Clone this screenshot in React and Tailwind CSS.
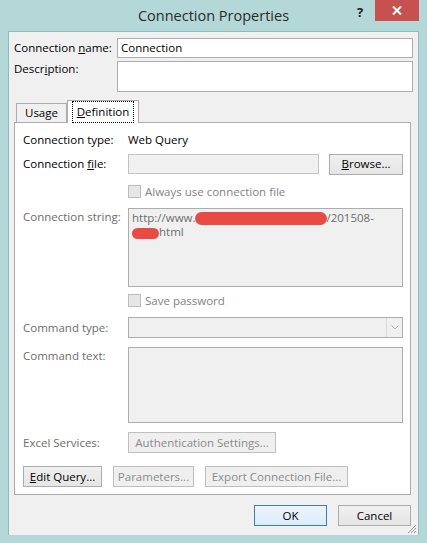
import React from 'react';

const font = { fontFamily: '"Open Sans", "Noto Sans", sans-serif' };

const Btn = ({ children, className = '', disabled = false }) => (
    <div className={`flex items-center justify-center h-[21px] border text-[11.5px] ${disabled ? 'border-[#bfbfbf] bg-[#efefef] text-[#8b8b8b]' : 'border-[#adadad] bg-gradient-to-b from-[#f0f0f0] to-[#e5e5e5] text-black'} ${className}`}>
        {children}
    </div>
);

const Check = ({ label }) => (
    <div className="flex items-center h-[13px]">
        <div className="w-[13px] h-[13px] border border-[#bcbcbc] bg-[#e6e6e6]" />
        <span className="ml-[4px] text-[11.5px] text-[#838383]">{label}</span>
    </div>
);

const Blob = ({ className }) => <span className={`inline-block bg-[#e84b44] rounded-full align-middle ${className}`} />;

export default function App() {
    return (
        <div style={font} className="w-[427px] h-[543px] bg-[#b4d7d8] flex flex-col text-[11.5px] text-black leading-none select-none">
            <div className="relative h-[31px] flex items-center justify-center">
                <span className="text-[14.5px] text-[#2b2b2b] mt-[1px]">Connection Properties</span>
                <span className="absolute left-[357px] top-[6px] text-[13px] font-bold text-[#222]">?</span>
                <div className="absolute left-[375px] top-0 w-[44px] h-[21px] bg-[#c75050] flex items-center justify-center">
                    <svg width="10" height="9" viewBox="0 0 10 9">
                        <path d="M1 0.5 L9 8.5 M9 0.5 L1 8.5" stroke="#fff" strokeWidth="2" />
                    </svg>
                </div>
            </div>
            <div className="relative mx-[8px] h-[504px] bg-[#f0f0f0] border border-[#8fb9ba] border-b-0 flex flex-col px-[5px]">
                <div className="flex items-center mt-[6px] h-[20px]">
                    <span className="w-[103px]">Connection <u>n</u>ame:</span>
                    <div className="flex-1 h-[20px] bg-white border border-[#abadb3] flex items-center px-[3px]">Connection</div>
                </div>
                <div className="flex items-start mt-[3px] h-[31px]">
                    <span className="w-[103px] mt-[2px]">Descr<u>i</u>ption:</span>
                    <div className="flex-1 h-[31px] bg-white border border-[#abadb3]" />
                </div>
                <div className="flex items-end mt-[8px] h-[22px] pl-[2px] relative z-10">
                    <div className="w-[51px] h-[19px] border border-[#acacac] border-b-0 bg-[#f0f0f0] flex items-center justify-center">
                        Usa<u>g</u>e
                    </div>
                    <div className="w-[72px] h-[23px] -mb-[1px] border border-[#acacac] border-b-0 bg-white flex items-center justify-center">
                        <span className="px-[4px] py-[4px] border border-dotted border-black"><u>D</u>efinition</span>
                    </div>
                </div>
                <div className="w-[397px] h-[373px] bg-white border border-[#acacac] flex flex-col pl-[8px] pr-[7px]">
                    <div className="flex items-center mt-[8px] h-[17px]">
                        <span className="w-[105px]">Connection type:</span>
                        <span>Web Query</span>
                    </div>
                    <div className="flex items-center mt-[6px] h-[20px]">
                        <span className="w-[105px]">Connection <u>f</u>ile:</span>
                        <div className="w-[191px] h-[20px] border border-[#c3c3c3] bg-[#f0f0f0]" />
                        <Btn className="w-[74px] ml-[10px] h-[20px]"><span><u>B</u>rowse...</span></Btn>
                    </div>
                    <div className="flex items-center mt-[11px] pl-[105px]">
                        <Check label="Always use connection file" />
                    </div>
                    <div className="flex items-start mt-[10px] h-[79px]">
                        <span className="w-[105px] mt-[3px] text-[#6d6d6d]">Connection string:</span>
                        <div className="w-[275px] h-[79px] border border-[#adadad] bg-[#f0f0f0] px-[3px] pt-[2px] text-[#6d6d6d] leading-[14px]">
                            <div className="whitespace-nowrap">
                                http://www.
                                <Blob className="w-[132px] h-[13px] -ml-[1px] rounded-[6px]" />
                                /201508-
                            </div>
                            <div className="whitespace-nowrap">
                                <Blob className="w-[27px] h-[11px]" />
                                html
                            </div>
                        </div>
                    </div>
                    <div className="flex items-center mt-[7px] pl-[105px]">
                        <Check label="Save password" />
                    </div>
                    <div className="flex items-center mt-[10px] h-[21px]">
                        <span className="w-[105px] text-[#6d6d6d]">Command type:</span>
                        <div className="w-[275px] h-[21px] border border-[#adadad] bg-[#f0f0f0] flex justify-end">
                            <div className="w-[16px] h-full border-l border-[#d9d9d9] flex items-center justify-center">
                                <svg width="8" height="5" viewBox="0 0 8 5">
                                    <path d="M0.5 0.5 L4 4 L7.5 0.5" stroke="#b0b0b0" strokeWidth="1" fill="none" />
                                </svg>
                            </div>
                        </div>
                    </div>
                    <div className="flex items-start mt-[9px] h-[76px]">
                        <span className="w-[105px] mt-[3px] text-[#6d6d6d]">Command text:</span>
                        <div className="w-[275px] h-[76px] border border-[#adadad] bg-[#f0f0f0]" />
                    </div>
                    <div className="flex items-center mt-[9px] h-[21px]">
                        <span className="w-[105px] text-[#6d6d6d]">Excel Services:</span>
                        <Btn disabled className="w-[148px]">Authentication Settings...</Btn>
                    </div>
                    <div className="flex items-center mt-[13px] h-[21px]">
                        <Btn className="w-[79px] border-[#8a8a8a]"><span><u>E</u>dit Query...</span></Btn>
                        <Btn disabled className="w-[81px] ml-[11px]">Parameters...</Btn>
                        <Btn disabled className="w-[143px] ml-[11px]">Export Connection File...</Btn>
                    </div>
                </div>
                <div className="flex justify-end mt-[10px] pr-[2px]">
                    <div className="w-[73px] h-[21px] border border-[#3c7fb1] bg-gradient-to-b from-[#ecf4fc] to-[#dcecfc] flex items-center justify-center">OK</div>
                    <Btn className="w-[73px] ml-[11px]">Cancel</Btn>
                </div>
                <svg className="absolute right-[1px] bottom-[1px]" width="10" height="10" viewBox="0 0 10 10">
                    <path d="M9 1 L1 9 M9 4 L4 9 M9 7 L7 9" stroke="#9a9a9a" strokeWidth="1" />
                </svg>
            </div>
        </div>
    );
}
